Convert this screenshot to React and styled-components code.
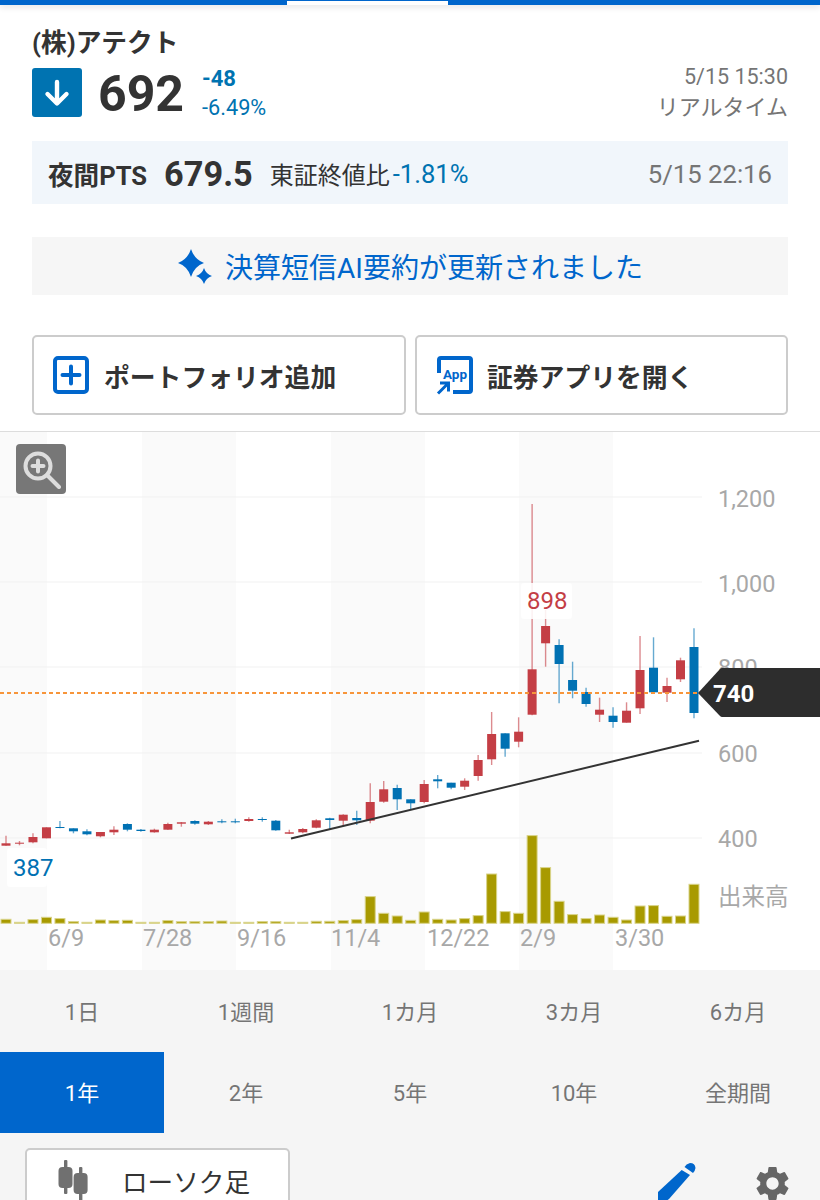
import styled, { createGlobalStyle } from "styled-components";
import { MdSettings } from "react-icons/md";

// [bodyTop, bodyBottom, wickTop, wickBottom, up]
const candles = [
  [843.3, 845.7, 835.7, 845.7, 1], [842.7, 843.7, 841, 845.3, 1], [837, 842.3, 833.3, 843.3, 1],
  [827.3, 838.3, 827.3, 838.3, 1], [827, 828, 821, 828.3, 0], [828.3, 831.3, 828.3, 833.3, 0],
  [831.3, 834.3, 829.3, 835.3, 0], [832, 836.3, 832, 837.3, 1], [829.7, 832.3, 826.3, 835, 1],
  [824, 829.7, 823.3, 831.3, 0], [829.7, 831, 829, 831.7, 0], [829.7, 832.3, 828.7, 832.7, 1],
  [824, 829.7, 822.7, 830, 1], [822.3, 823.7, 822, 826.7, 1], [821, 823.7, 820.3, 824.7, 0],
  [821.7, 824.3, 821, 825, 1], [821.3, 822.3, 819.3, 823.3, 0], [821.3, 822.3, 818.7, 823.3, 0],
  [819, 821, 817.3, 821.7, 1], [819, 820, 817.3, 821.7, 0], [820.7, 830.3, 820, 830.7, 0],
  [832.3, 833.7, 829.7, 834, 1], [829, 832.3, 828, 833.3, 1], [820.3, 827.7, 819.3, 828.3, 1],
  [818.3, 820, 817.7, 830, 0], [814.7, 820.7, 814.3, 825.7, 1], [818, 820.3, 810.7, 825, 0],
  [802, 820.7, 783.3, 823.3, 1], [789.3, 801.7, 781, 802.7, 1], [788, 799.3, 784.7, 810, 0],
  [799.3, 803.3, 799.3, 810, 0], [784, 802, 780, 803.3, 1], [779.3, 781.3, 775, 788.3, 0],
  [782.7, 787.7, 782.7, 789.3, 0], [780.7, 786.7, 778.3, 790, 1], [760, 776, 755, 780.7, 1],
  [734, 759.3, 712, 765, 1], [733.3, 748.7, 733.3, 756.7, 0], [731.7, 741.7, 717.3, 747.3, 1],
  [669.3, 714.7, 504, 715.3, 1], [626, 643.3, 610, 666.7, 1], [645, 664, 639.3, 703.3, 0],
  [680, 690.7, 661.7, 698.3, 0], [692, 704, 687.7, 706.7, 0], [709.7, 714.7, 697.7, 722, 1],
  [715.7, 722, 707.3, 727.7, 0], [710.7, 722.7, 702.3, 722.7, 1], [670, 708.3, 636, 714, 1],
  [667.7, 692.3, 637.3, 692.3, 0], [686, 692.7, 677.7, 702, 1], [660.3, 679.3, 657.7, 682, 1],
  [647, 713, 628.3, 718.3, 0],
];

const volumes = [
  4, 1, 3.7, 6, 4.7, 1.7, 1, 3.3, 2.7, 3, 1, 1, 2.7, 1.7, 1.7, 1.7, 2.3, 1, 1, 1.7, 1.7, 1, 1, 2, 2, 2.7,
  3.7, 26.7, 10, 7.3, 3, 11.3, 4, 3.3, 4.7, 7.7, 49.3, 11.7, 10, 87.7, 55.7, 22, 8.7, 4.7, 8.3, 6, 3.3,
  17.3, 17.7, 7, 7.3, 39,
];

const bands = [[0, 47], [142, 94], [331, 94], [519, 94]];
const gridLines = [
  { y: 497, labelY: 506.5, label: "1,200" },
  { y: 582, labelY: 591.5, label: "1,000" },
  { y: 667, labelY: 676, label: "800" },
  { y: 753, labelY: 761.5, label: "600" },
  { y: 838, labelY: 846.5, label: "400" },
];
const dates = [
  { x: 48, label: "6/9" },
  { x: 143, label: "7/28" },
  { x: 237, label: "9/16" },
  { x: 331, label: "11/4" },
  { x: 427, label: "12/22" },
  { x: 520, label: "2/9" },
  { x: 615, label: "3/30" },
];
const periods = ["1日", "1週間", "1カ月", "3カ月", "6カ月", "1年", "2年", "5年", "10年", "全期間"];

const candleX = (i) => 6 + 13.49 * i;

const Chart = () => (
  <ChartSvg viewBox="0 432 820 538">
    {bands.map(([x, w]) => (
      <rect key={x} x={x} y={432} width={w} height={538} fill="#fafafa" />
    ))}
    {gridLines.map((g) => (
      <line key={g.y} x1={0} x2={702} y1={g.y} y2={g.y} stroke="#f1f1f1" strokeWidth={1} />
    ))}
    {gridLines.map((g) => (
      <AxisLabel key={g.label} x={718} y={g.labelY}>
        {g.label}
      </AxisLabel>
    ))}
    <AxisLabel x={718} y={905}>出来高</AxisLabel>
    {dates.map((d) => (
      <AxisLabel key={d.label} x={d.x} y={946}>
        {d.label}
      </AxisLabel>
    ))}

    {volumes.map((h, i) => (
      <rect
        key={i}
        x={candleX(i) - 5}
        y={923.3 - h}
        width={10}
        height={h}
        fill="#a89a00"
        stroke="#d9d48a"
        strokeWidth={1}
      />
    ))}

    {candles.map(([top, bottom, wickTop, wickBottom, up], i) => {
      const color = up ? "#c43e45" : "#0071b3";
      return (
        <g key={i}>
          <line
            x1={candleX(i)}
            x2={candleX(i)}
            y1={wickTop}
            y2={wickBottom}
            stroke={color}
            strokeOpacity={0.6}
            strokeWidth={1.4}
          />
          <rect x={candleX(i) - 4.5} y={top} width={9} height={bottom - top} fill={color} />
        </g>
      );
    })}

    <line x1={291} y1={838.5} x2={699} y2={740.7} stroke="#333" strokeWidth={2} />
    <line x1={0} x2={700} y1={693} y2={693} stroke="#f7953a" strokeWidth={1.8} strokeDasharray="4 3" />

    <rect x={7} y={848} width={40} height={39} rx={3} fill="#fff" fillOpacity={0.85} />
    <ValueLabel x={13} y={876} fill="#0071b3">387</ValueLabel>
    <rect x={521} y={583} width={51} height={36} rx={3} fill="#fff" fillOpacity={0.88} />
    <ValueLabel x={527} y={609} fill="#c43e45">898</ValueLabel>

    <path d="M698 693 L720 669 Q721 668 722 668 L820 668 L820 717 L722 717 Q721 717 720 716 Z" fill="#2d2d2d" />
    <PriceTagText x={713} y={702}>740</PriceTagText>
  </ChartSvg>
);

const App = () => (
  <>
    <GlobalStyle />
    <Page>
      <TopBar>
        <TabMark />
      </TopBar>

      <Header>
        <Title>(株)アテクト</Title>
        <QuoteRow>
          <DirectionBox>
            <svg width="26" height="28" viewBox="0 0 26 28" fill="none" stroke="#fff" strokeWidth="4.4" strokeLinecap="round" strokeLinejoin="round">
              <path d="M13 3 V24 M3.5 15 L13 24.5 L22.5 15" />
            </svg>
          </DirectionBox>
          <Price>692</Price>
          <ChangeCol>
            <ChangeValue>-48</ChangeValue>
            <ChangeRate>-6.49%</ChangeRate>
          </ChangeCol>
          <TimeCol>
            <TimeText>5/15 15:30</TimeText>
            <RealtimeText>リアルタイム</RealtimeText>
          </TimeCol>
        </QuoteRow>

        <PtsBox>
          <PtsLabel>夜間PTS</PtsLabel>
          <PtsPrice>679.5</PtsPrice>
          <PtsCompare>東証終値比</PtsCompare>
          <PtsRate>-1.81%</PtsRate>
          <PtsTime>5/15 22:16</PtsTime>
        </PtsBox>

        <AiBox>
          <svg width="36" height="38" viewBox="178 246 36 38" fill="#0066cc">
            <path d="M192 248 Q195.5 258.5 205 262 Q195.5 265 192 276 Q188.5 265 179 262 Q188.5 258.5 192 248 Z" />
            <path d="M205 267 Q207 273 213 275 Q207 277 205 283 Q203 277 197 275 Q203 273 205 267 Z" />
          </svg>
          <AiText>決算短信AI要約が更新されました</AiText>
        </AiBox>

        <ButtonRow>
          <ActionButton>
            <svg width="38" height="40" viewBox="0 0 38 40" fill="none" stroke="#0066cc" strokeWidth="4">
              <rect x="3" y="3" width="32" height="34" rx="3" />
              <path d="M10.5 20 H27.5 M19 11.5 V28.5" strokeLinecap="round" />
            </svg>
            <ActionText>ポートフォリオ追加</ActionText>
          </ActionButton>
          <ActionButton>
            <svg width="38" height="40" viewBox="0 0 38 40" fill="none" stroke="#0066cc" strokeWidth="4">
              <path d="M4 18 V5 Q4 3 6 3 H34 Q36 3 36 5 V35 Q36 37 34 37 H18" />
              <path d="M3 38.5 L12 29.5 M5 28 H13.5 V36.5" strokeWidth="3" />
              <AppText x="8" y="23.5">App</AppText>
            </svg>
            <ActionText>証券アプリを開く</ActionText>
          </ActionButton>
        </ButtonRow>
      </Header>

      <ChartArea>
        <ZoomButton>
          <svg width="40" height="40" viewBox="0 0 40 40" fill="none" stroke="#ddd" strokeWidth="4">
            <circle cx="17" cy="17" r="12.5" />
            <path d="M26 26 L38 38" strokeLinecap="round" />
            <path d="M11.5 17 H22.5 M17 11.5 V22.5" strokeLinecap="round" />
          </svg>
        </ZoomButton>
        <Chart />
      </ChartArea>

      <Controls>
        <PeriodGrid>
          {periods.map((p) => (
            <PeriodCell key={p} $active={p === "1年"}>
              {p}
            </PeriodCell>
          ))}
        </PeriodGrid>
        <ToolRow>
          <ChartTypeButton>
            <svg width="30" height="42" viewBox="0 0 30 42" fill="#707070">
              <rect x="6" y="0" width="3.4" height="34" rx="1" />
              <rect x="0.5" y="7" width="14" height="21" rx="4" />
              <rect x="21" y="7" width="3.4" height="35" rx="1" />
              <rect x="15.6" y="13" width="14" height="21" rx="4" />
            </svg>
            <ChartTypeText>ローソク足</ChartTypeText>
          </ChartTypeButton>
          <ToolIcons>
            <svg width="38" height="38" viewBox="658 1163 38 38" fill="#0066cc">
              <path d="M681.7 1170 L690 1175 L669 1199 L662 1204 L658 1200 L658 1192 Z" />
              <path d="M684.5 1167 Q686 1164 690 1163 Q695 1163 695.5 1168 Q695 1171 693 1173 Z" />
            </svg>
            <MdSettings size={41} color="#666" />
          </ToolIcons>
        </ToolRow>
      </Controls>
    </Page>
  </>
);

export default App;

const fontStack = `Roboto, "Noto Sans CJK JP", sans-serif`;

const GlobalStyle = createGlobalStyle`
  body {
    margin: 0;
    background: #fff;
    font-family: ${fontStack};
  }
`;

const Page = styled.div`
  width: 820px;
  height: 1200px;
  overflow: hidden;
  display: flex;
  flex-direction: column;
  font-family: ${fontStack};
`;

const TopBar = styled.div`
  height: 5px;
  flex: none;
  background: #0066cc;
  box-shadow: 0 2px 6px rgba(0, 0, 0, 0.12);
  display: flex;
`;

const TabMark = styled.div`
  width: 161px;
  height: 4px;
  margin: 1px 0 0 287px;
  background: #fff;
`;

const Header = styled.header`
  height: 426px;
  flex: none;
  box-sizing: border-box;
  padding: 23px 32px 0;
  display: flex;
  flex-direction: column;
`;

const Title = styled.div`
  font-size: 25.7px;
  font-weight: 700;
  line-height: 30px;
  color: #333;
`;

const QuoteRow = styled.div`
  display: flex;
  align-items: center;
  height: 49px;
  margin-top: 10px;
`;

const DirectionBox = styled.div`
  width: 50px;
  height: 49px;
  border-radius: 3px;
  background: #0073b1;
  display: flex;
  align-items: center;
  justify-content: center;
`;

const Price = styled.div`
  margin: 4px 0 0 16px;
  font-size: 50px;
  font-weight: 700;
  line-height: 49px;
  color: #333;
`;

const ChangeCol = styled.div`
  margin: 2px 0 0 18px;
  display: flex;
  flex-direction: column;
  color: #0073b1;
`;

const ChangeValue = styled.div`
  font-size: 22px;
  font-weight: 700;
  line-height: 24px;
`;

const ChangeRate = styled.div`
  margin-top: 5px;
  font-size: 21.7px;
  line-height: 24px;
`;

const TimeCol = styled.div`
  margin-left: auto;
  display: flex;
  flex-direction: column;
  align-items: flex-end;
  color: #757575;
`;

const TimeText = styled.div`
  font-size: 21.5px;
  line-height: 26px;
`;

const RealtimeText = styled.div`
  margin-top: 4px;
  font-size: 22px;
  line-height: 28px;
`;

const PtsBox = styled.div`
  height: 63px;
  box-sizing: border-box;
  margin-top: 24px;
  padding: 2px 16px 0;
  background: #f1f6fb;
  display: flex;
  align-items: center;
`;

const PtsLabel = styled.div`
  font-size: 25.6px;
  font-weight: 700;
  color: #333;
`;

const PtsPrice = styled.div`
  margin-left: 17px;
  font-size: 34.3px;
  font-weight: 700;
  color: #333;
`;

const PtsCompare = styled.div`
  margin-left: 17px;
  font-size: 24px;
  color: #333;
`;

const PtsRate = styled.div`
  margin-left: 3px;
  font-size: 25.6px;
  color: #0073b1;
`;

const PtsTime = styled.div`
  margin-left: auto;
  font-size: 25.7px;
  color: #757575;
`;

const AiBox = styled.div`
  height: 58px;
  margin-top: 33px;
  background: #f6f6f6;
  display: flex;
  align-items: center;
  justify-content: center;
  gap: 12px;
`;

const AiText = styled.div`
  font-size: 28px;
  color: #0066cc;
`;

const ButtonRow = styled.div`
  display: grid;
  grid-template-columns: 374px 373px;
  justify-content: space-between;
  margin-top: 40px;
`;

const ActionButton = styled.div`
  height: 80px;
  box-sizing: border-box;
  border: 2px solid #ccc;
  border-radius: 5px;
  padding-left: 18px;
  display: flex;
  align-items: center;
  gap: 14px;
`;

const ActionText = styled.div`
  font-size: 25.8px;
  font-weight: 700;
  color: #333;
`;

const AppText = styled.text`
  font-family: ${fontStack};
  font-size: 13.5px;
  font-weight: 700;
  fill: #0066cc;
  stroke: none;
`;

const ChartArea = styled.div`
  position: relative;
  flex: none;
  height: 538px;
  border-top: 1px solid #ddd;
`;

const ChartSvg = styled.svg`
  display: block;
  width: 820px;
  height: 538px;
`;

const ZoomButton = styled.div`
  position: absolute;
  left: 16px;
  top: 12px;
  width: 50px;
  height: 50px;
  border-radius: 4px;
  background: #777;
  display: flex;
  align-items: center;
  justify-content: center;
`;

const AxisLabel = styled.text`
  font-family: ${fontStack};
  font-size: 23.5px;
  fill: #a8a8a8;
`;

const ValueLabel = styled.text`
  font-family: ${fontStack};
  font-size: 24px;
`;

const PriceTagText = styled.text`
  font-family: ${fontStack};
  font-size: 24px;
  font-weight: 700;
  fill: #fff;
`;

const Controls = styled.div`
  flex: 1;
  background: #f5f5f5;
  display: flex;
  flex-direction: column;
`;

const PeriodGrid = styled.div`
  display: grid;
  grid-template-columns: repeat(5, 164px);
  grid-auto-rows: 81.5px;
`;

const PeriodCell = styled.div`
  box-sizing: border-box;
  padding-bottom: 2px;
  display: flex;
  align-items: center;
  justify-content: center;
  font-size: 22px;
  color: ${(props) => (props.$active ? "#fff" : "#757575")};
  background: ${(props) => (props.$active ? "#0066cc" : "transparent")};
`;

const ToolRow = styled.div`
  display: flex;
  align-items: flex-start;
  justify-content: space-between;
  padding: 15px 27px 0 25px;
`;

const ChartTypeButton = styled.div`
  width: 265px;
  height: 70px;
  box-sizing: border-box;
  border: 2px solid #ccc;
  border-radius: 5px;
  background: #fff;
  padding: 10px 0 0 31px;
  display: flex;
  align-items: flex-start;
  gap: 34px;
`;

const ChartTypeText = styled.div`
  margin-top: 2px;
  font-size: 25.6px;
  line-height: 42px;
  color: #333;
`;

const ToolIcons = styled.div`
  display: flex;
  align-items: flex-start;
  gap: 56px;
  padding-top: 15px;
`;
